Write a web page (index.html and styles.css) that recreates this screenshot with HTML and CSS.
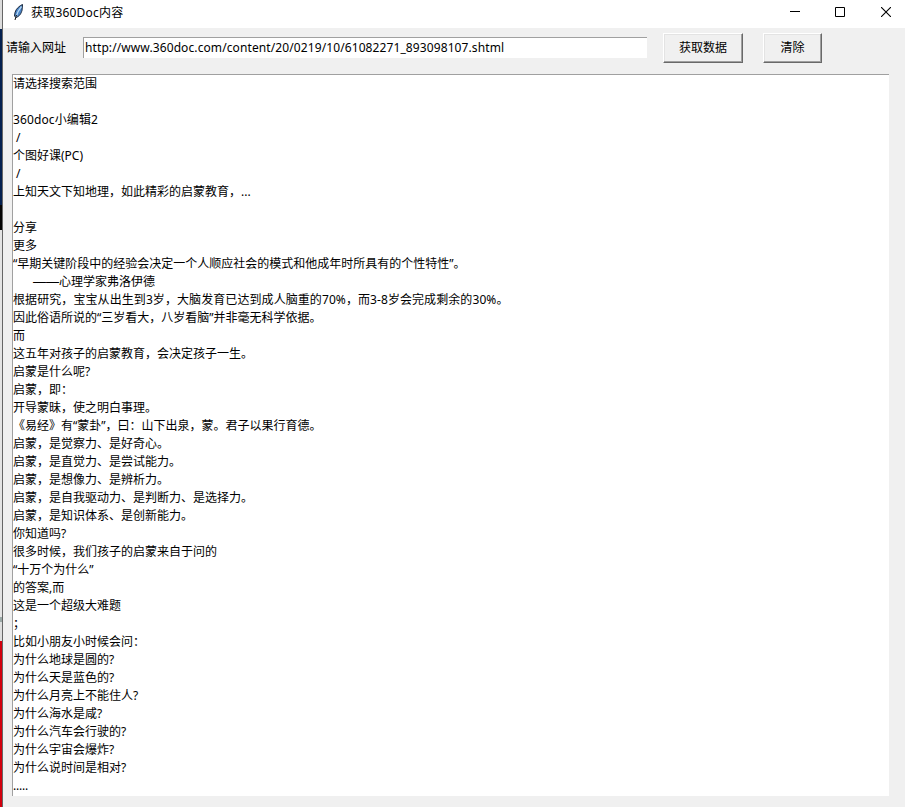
FILE: index.html
```html
<!DOCTYPE html>
<html lang="zh-CN">
<head>
<meta charset="utf-8">
<title>获取360Doc内容</title>
<link rel="stylesheet" href="styles.css">
</head>
<body>
<div class="desktop"></div>
<main class="window">
  <header class="titlebar">
    <svg class="feather" width="12" height="17" viewBox="0 0 12 17"><path d="M9.500.5C7 1.500 3 4.500 2 8.500l-.5 3.500 1.500 1.500c4-1.500 5-4 6-7z" fill="#4c86c8" stroke="#172438"/><path d="M8.500 2.500C6 5.500 4 9 3 13" fill="none" stroke="#b7d8f5" stroke-width="1.200"/><path d="M3.500 11 2 16" stroke="#111"/></svg>
    <h1 class="title">获取360Doc内容</h1>
    <div class="controls">
      <svg width="10" height="10" viewBox="0 0 10 10"><path d="M0 4.500h10" stroke="#000"/></svg>
      <svg class="maximize" width="10" height="10" viewBox="0 0 10 10"><path d="M.5.5h9v9h-9z" fill="none" stroke="#000"/></svg>
      <svg width="10" height="10" viewBox="0 0 10 10"><path d="m0 0 10 10M10 0 0 10" stroke="#000" stroke-width="1.100"/></svg>
    </div>
  </header>
  <div class="toolbar">
    <span class="label">请输入网址</span>
    <div class="entry"><span class="url">http://www.360doc.com/content/20/0219/10/61082271_893098107.shtml</span></div>
    <button class="button fetch">获取数据</button>
    <button class="button clear">清除</button>
  </div>
  <div class="text">
    <p>请选择搜索范围</p>
    <p></p>
    <p class="account">360doc小编辑2</p>
    <p> /</p>
    <p>个图好课(PC)</p>
    <p> /</p>
    <p>上知天文下知地理，如此精彩的启蒙教育，...</p>
    <p></p>
    <p>分享</p>
    <p>更多</p>
    <p>“早期关键阶段中的经验会决定一个人顺应社会的模式和他成年时所具有的个性特性”。</p>
    <p class="byline"><span class="dash">——</span><span>心理学家弗洛伊德</span></p>
    <p class="figures">根据研究，宝宝从出生到3岁，大脑发育已达到成人脑重的70%，而3-8岁会完成剩余的30%。</p>
    <p>因此俗语所说的“三岁看大，八岁看脑”并非毫无科学依据。</p>
    <p>而</p>
    <p>这五年对孩子的启蒙教育，会决定孩子一生。</p>
    <p>启蒙是什么呢?</p>
    <p>启蒙，即：</p>
    <p>开导蒙昧，使之明白事理。</p>
    <p>《易经》有“蒙卦”，曰：山下出泉，蒙。君子以果行育德。</p>
    <p>启蒙，是觉察力、是好奇心。</p>
    <p>启蒙，是直觉力、是尝试能力。</p>
    <p>启蒙，是想像力、是辨析力。</p>
    <p>启蒙，是自我驱动力、是判断力、是选择力。</p>
    <p>启蒙，是知识体系、是创新能力。</p>
    <p>你知道吗?</p>
    <p>很多时候，我们孩子的启蒙来自于问的</p>
    <p>“十万个为什么”</p>
    <p>的答案,而</p>
    <p>这是一个超级大难题</p>
    <p>；</p>
    <p>比如小朋友小时候会问：</p>
    <p>为什么地球是圆的?</p>
    <p>为什么天是蓝色的?</p>
    <p>为什么月亮上不能住人?</p>
    <p>为什么海水是咸?</p>
    <p>为什么汽车会行驶的?</p>
    <p>为什么宇宙会爆炸?</p>
    <p>为什么说时间是相对?</p>
    <p class="ellipsis">.....</p>
  </div>
</main>
</body>
</html>
```
FILE: styles.css
```css
* { box-sizing: border-box; }
body {
  margin: 0;
  display: flex;
  width: 905px;
  height: 807px;
  overflow: hidden;
  color: #000;
  font: 12px/18px "Noto Sans", "Noto Sans CJK SC", sans-serif;
}
.desktop {
  width: 3px;
  border-right: 1px solid #666;
  background: linear-gradient(#dcdcdc 29px, #04204f 29px 205px, #050505 205px 230px, #e4e4e4 230px 617px, #9aa8a6 617px 622px, #dedede 622px 641px, #d2000e 641px);
}
.window { flex: 1; background: #f0f0f0; }
.titlebar {
  display: flex;
  align-items: center;
  height: 28px;
  padding: 0 14px 0 10px;
  background: #fff;
}
.feather { margin: 0 6px 4px 0; }
.title { flex: 1; margin: 0 0 2px; font-size: 12px; font-weight: 400; letter-spacing: 0.2px; }
.controls { display: flex; gap: 35px; margin-bottom: 4px; }
.controls svg { display: block; }
.controls .maximize { margin-right: 1px; }
.toolbar { display: flex; align-items: flex-start; height: 46px; padding: 5px 0 0 3px; }
.label { width: 77px; margin-top: 6px; }
.entry {
  width: 564px;
  height: 21px;
  margin: 4px 16px 0 0;
  padding-left: 1px;
  border: solid #a0a0a0;
  border-width: 1px 0 0 1px;
  background: #fff;
}
.url { display: block; line-height: 20px; white-space: nowrap; letter-spacing: 0.1px; }
.button {
  height: 30px;
  padding: 0 0 1px;
  border: 1px solid #fff;
  border-right-color: #696969;
  border-bottom-color: #696969;
  border-radius: 0;
  background: #f0f0f0;
  box-shadow: inset -1px -1px #a0a0a0, inset 1px 1px #e3e3e3;
  color: #000;
  font: inherit;
}
.fetch { width: 80px; margin-right: 20px; }
.clear { width: 59px; }
.text {
  width: 877px;
  height: 722px;
  margin-left: 9px;
  border: solid #a0a0a0;
  border-width: 1px 0 0 1px;
  background: #fff;
  overflow: hidden;
}
.text p { height: 18px; margin: 0; white-space: pre; }
.text .byline { display: flex; padding-left: 20px; }
.dash { width: 26px; font-family: "Liberation Sans", sans-serif; font-size: 13px; }
.account { letter-spacing: 0.12px; }
.figures { letter-spacing: 0.08px; }
.ellipsis { letter-spacing: -0.2px; }
```
